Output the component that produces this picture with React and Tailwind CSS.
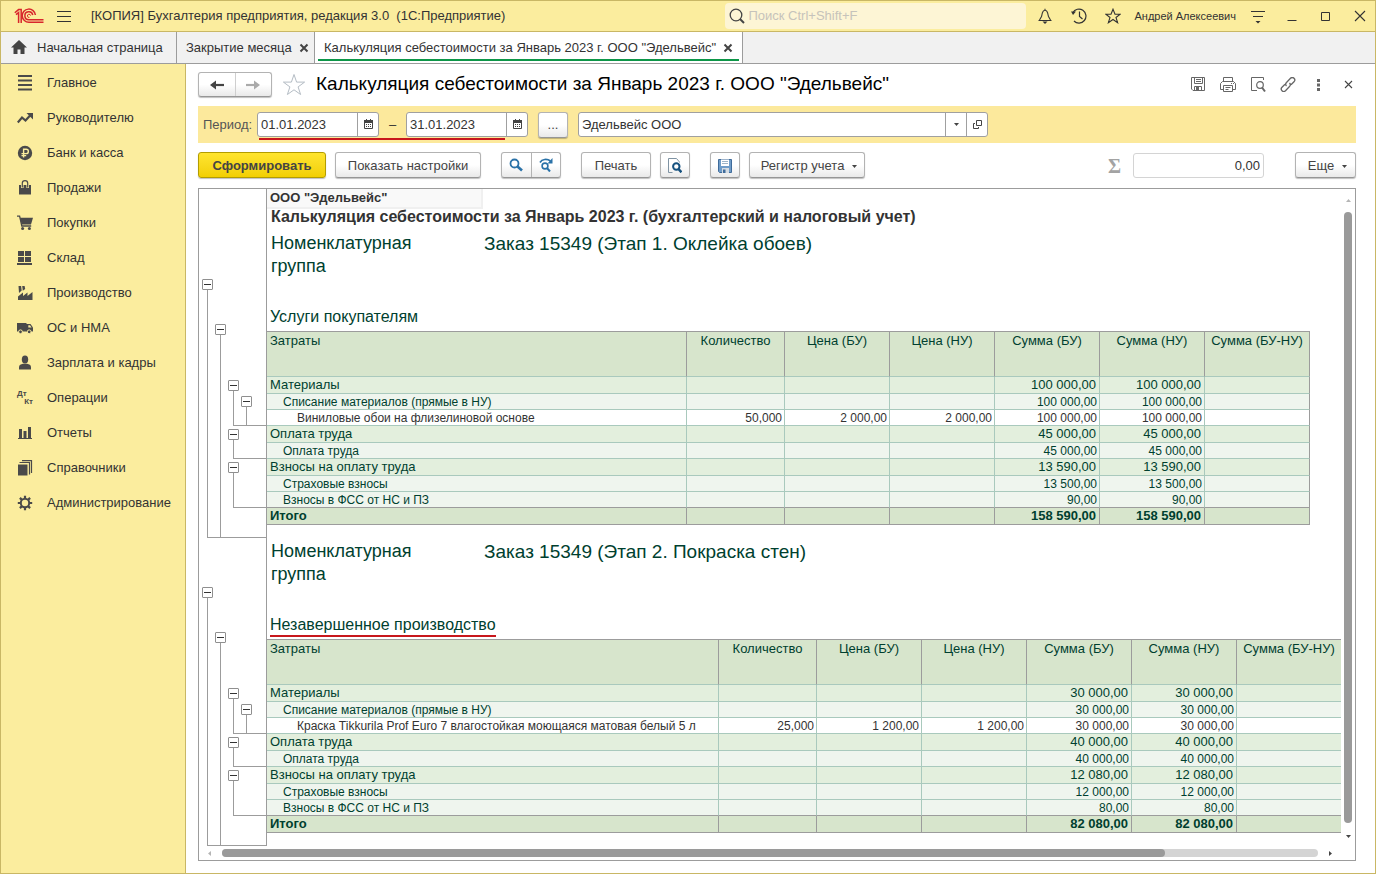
import React, { useState } from "react";
import clsx from "clsx";

const Svg = ({ w = 16, h = 16, className, children }) => (
  <svg
    width={w}
    height={h}
    viewBox={`0 0 ${w} ${h}`}
    fill="none"
    className={clsx("block shrink-0", className)}
    aria-hidden="true"
  >
    {children}
  </svg>
);

const Logo = () => (
  <Svg w={30} h={16}>
    <g stroke="#d8262c" strokeWidth="1.5">
      <path d="M0.8 4.8 L4.6 1.6 H7.2 V15" />
      <path d="M2 6.6 L4.6 4.6 V15" />
      <path d="M21.4 7 A6.6 6.6 0 1 0 15 14.3 H29.5" />
      <path d="M18.8 7 A4 4 0 1 0 15 11.8 H29.5" />
      <path d="M16.6 7.6 A1.6 1.6 0 1 0 15.4 9.4" strokeWidth="1" />
    </g>
  </Svg>
);

const sectionIcons = {
  main: (
    <Svg>
      <path d="M1 1h14M1 5.5h14M1 10h14M1 14.5h14" stroke="#4a4a4a" strokeWidth="2" />
    </Svg>
  ),
  chief: (
    <Svg>
      <path d="M0.8 12.5 L5 7.5 L8.5 10.5 L14 4.5" stroke="#4a4a4a" strokeWidth="2.2" />
      <path d="M9.5 3h6.5v6.5z" fill="#4a4a4a" />
    </Svg>
  ),
  bank: (
    <Svg>
      <circle cx="8" cy="8" r="7.2" fill="#4a4a4a" />
      <path d="M6.6 12.5V4.3h2.6a2.1 2.1 0 0 1 0 4.3H4.5M4.5 10.6h4.7" stroke="#fbed9e" strokeWidth="1.4" />
    </Svg>
  ),
  sales: (
    <Svg>
      <path d="M2 5h12v9.5H2z" fill="#4a4a4a" />
      <path d="M5.3 8V3.5a2.7 2.7 0 0 1 5.4 0V8" stroke="#fbed9e" strokeWidth="2.6" />
      <path d="M5.3 7.5V3.3a2.7 2.7 0 0 1 5.4 0v4.2" stroke="#4a4a4a" strokeWidth="1.2" />
    </Svg>
  ),
  purchases: (
    <Svg>
      <path d="M0 1.2h2.6l2.2 9.8h9.4" stroke="#4a4a4a" strokeWidth="1.3" />
      <path d="M3 2.8h13l-2 6.6H4.6z" fill="#4a4a4a" />
      <circle cx="5.6" cy="13.4" r="1.5" fill="#4a4a4a" />
      <circle cx="12.4" cy="13.4" r="1.5" fill="#4a4a4a" />
    </Svg>
  ),
  stock: (
    <Svg>
      <path d="M1 1h6v5H1zM8 1h6v5H8zM1 7h6v5H1zM8 7h6v5H8zM0 13h15v2H0z" fill="#4a4a4a" />
    </Svg>
  ),
  production: (
    <Svg>
      <path d="M1 15V11.5L6 7.5V11L10.5 7.5V11L15.5 7V15z" fill="#4a4a4a" />
      <path d="M1.5 1h2.6l.6 4.5L2 8zM5.2 1h2.4l.6 3L5.8 5.8z" fill="#4a4a4a" />
    </Svg>
  ),
  assets: (
    <Svg>
      <path d="M0 3h9.5v8.500H0z" fill="#4a4a4a" />
      <path d="M9 4h4.500l2.500 3.500v4H9z" fill="#4a4a4a" />
      <path d="M11.300 5.300h1.700l1.600 2.300h-3.300z" fill="#fbed9e" />
      <circle cx="3.500" cy="11.800" r="1.900" fill="#4a4a4a" stroke="#fbed9e" />
      <circle cx="12.200" cy="11.800" r="1.900" fill="#4a4a4a" stroke="#fbed9e" />
    </Svg>
  ),
  salary: (
    <Svg>
      <ellipse cx="8" cy="4.500" rx="3.200" ry="3.900" fill="#4a4a4a" />
      <path d="M2 14.500v-2.300C2 10 3.800 9.200 6 8.800h4c2.200.4 4 1.200 4 3.400v2.300z" fill="#4a4a4a" />
    </Svg>
  ),
  reports: (
    <Svg>
      <path d="M1 13.500h14" stroke="#4a4a4a" />
      <path d="M2 4h3v9H2zM6.500 6h3v7h-3zM11 2h3v11h-3z" fill="#4a4a4a" />
    </Svg>
  ),
  catalogs: (
    <Svg>
      <path d="M1 4.500h9.500v11H1z" fill="#4a4a4a" />
      <path d="M2.500 2.500h10v12M5 .6h9.500v12.400" stroke="#4a4a4a" strokeWidth="1.200" />
    </Svg>
  ),
  admin: (
    <Svg>
      <circle cx="8" cy="8" r="4.200" stroke="#4a4a4a" strokeWidth="2" />
      <path
        d="M8 .8v3M8 12.200v3M.8 8h3M12.200 8h3M2.900 2.900l2 2M11.100 11.100l2 2M2.900 13.100l2-2M11.100 4.900l2-2"
        stroke="#4a4a4a"
        strokeWidth="2.200"
      />
    </Svg>
  ),
};

const sections = [
  { name: "Главное", icon: "main" },
  { name: "Руководителю", icon: "chief" },
  { name: "Банк и касса", icon: "bank" },
  { name: "Продажи", icon: "sales" },
  { name: "Покупки", icon: "purchases" },
  { name: "Склад", icon: "stock" },
  { name: "Производство", icon: "production" },
  { name: "ОС и НМА", icon: "assets" },
  { name: "Зарплата и кадры", icon: "salary" },
  { name: "Операции", icon: "operations" },
  { name: "Отчеты", icon: "reports" },
  { name: "Справочники", icon: "catalogs" },
  { name: "Администрирование", icon: "admin" },
];

const IconButton = ({ label, className, children }) => (
  <button type="button" aria-label={label} className={clsx("flex items-center justify-center", className)}>
    {children}
  </button>
);

const TitleBar = () => (
  <header className="flex h-[31px] items-center border-b border-[#c9b765] bg-[#fbed9e] pl-[13px] pr-[7px]">
    <Logo />
    <IconButton label="Меню" className="ml-3 h-4 w-4">
      <Svg>
        <path d="M1 3.500h14M1 8.500h14M1 13.500h14" stroke="#333" />
      </Svg>
    </IconButton>
    <span className="ml-[19px] whitespace-pre text-[13px]">[КОПИЯ] Бухгалтерия предприятия, редакция 3.0  (1С:Предприятие)</span>
    <label className="ml-auto flex h-[26px] w-[301px] items-center rounded-sm bg-[#fdf5d5] pl-1">
      <Svg w={16} h={16}>
        <circle cx="7" cy="7" r="5.800" stroke="#444" strokeWidth="1.300" />
        <path d="M11 11l4 4" stroke="#444" strokeWidth="2" />
      </Svg>
      <input
        type="search"
        aria-label="Поиск"
        placeholder="Поиск Ctrl+Shift+F"
        className="ml-[3px] min-w-0 flex-1 bg-transparent text-[13px] outline-none placeholder:text-[#c6c3bb]"
      />
    </label>
    <IconButton label="Уведомления" className="ml-[11px] h-4 w-4">
      <Svg>
        <path d="M1.500 12.500h13M2.500 12l2-3.500C5 7 5 6 5.500 4.500 6 2.800 7 2.300 8 2.300s2 .5 2.500 2.200C11 6 11 7 11.500 8.500l2 3.500M8 .8v1.500" stroke="#333" strokeWidth="1.100" />
        <path d="M5.500 13.500h5L8 16z" fill="#333" />
      </Svg>
    </IconButton>
    <IconButton label="История" className="ml-[18px] h-4 w-4">
      <Svg>
        <path d="M1.800 4.700A7 7 0 1 1 3 13M8.500 3.500v5l3 2.500" stroke="#333" strokeWidth="1.200" />
        <path d="M0 3.500h5L2 7z" fill="#333" />
      </Svg>
    </IconButton>
    <IconButton label="Избранное" className="ml-[18px] h-4 w-4">
      <Svg>
        <path d="M8 1.200l2 5h5.200l-4.200 3.300 1.600 5.200L8 11.500l-4.600 3.200L5 9.500.8 6.200H6z" stroke="#333" strokeWidth="1.100" />
      </Svg>
    </IconButton>
    <span className="ml-[13px] text-[11px]">Андрей Алексеевич</span>
    <IconButton label="Сервис" className="ml-3.5 h-4 w-4">
      <Svg>
        <path d="M1 3.500h14M3 8.500h10" stroke="#333" />
        <path d="M5.500 13h5L8 15.500z" fill="#333" />
      </Svg>
    </IconButton>
    <IconButton label="Свернуть" className="ml-[18px] h-4 w-4">
      <Svg>
        <path d="M3.500 12.500h9" stroke="#333" />
      </Svg>
    </IconButton>
    <IconButton label="Развернуть" className="ml-[18px] h-4 w-4">
      <Svg>
        <path d="M3.500 4.500h8v8h-8z" stroke="#333" />
      </Svg>
    </IconButton>
    <IconButton label="Закрыть" className="ml-[18px] h-4 w-4">
      <Svg>
        <path d="M3 3l10 10M13 3L3 13" stroke="#333" strokeWidth="1.100" />
      </Svg>
    </IconButton>
  </header>
);

const CloseTab = () => (
  <IconButton label="Закрыть вкладку" className="ml-1.5 h-3 w-3">
    <Svg w={12} h={12}>
      <path d="M2.500 2.500l7 7M9.500 2.500l-7 7" stroke="#444" strokeWidth="2" />
    </Svg>
  </IconButton>
);

const Tabs = () => (
  <nav className="flex h-8 border-b border-[#9c9c9c] bg-[#f1f1f1]">
    <a href="#home" className="flex w-[176px] items-center border-r border-[#9c9c9c] pl-2.5">
      <Svg>
        <path d="M8 0L0 7.500h2.500V14h4V9.500h3V14h4V7.500H16z" fill="#444" />
      </Svg>
      <span className="ml-2.5 text-[13px]">Начальная страница</span>
    </a>
    <div className="flex w-[138px] items-center border-r border-[#9c9c9c] pl-[9px]">
      <a href="#closing" className="text-[13px]">Закрытие месяца</a>
      <CloseTab />
    </div>
    <div className="flex w-[428px] flex-col border-r border-[#9c9c9c] bg-white px-[3px] pb-0.5">
      <div className="flex flex-1 items-center border-b-2 border-[#0d9648] pl-1.5 pt-1">
        <a href="#report" className="text-[13px]">Калькуляция себестоимости за Январь 2023 г. ООО "Эдельвейс"</a>
        <CloseTab />
      </div>
    </div>
  </nav>
);

const Sidebar = () => (
  <aside className="w-[185px] shrink-0 border-r border-[#c9b765] bg-[#fbed9e] pt-px">
    {sections.map((item) => (
      <a key={item.name} href="#section" className="flex h-[35px] items-center pl-4">
        {item.icon === "operations" ? (
          <span className="flex w-4 flex-col text-[8px] font-bold leading-[8px] text-[#4a4a4a]">
            <span>Дт</span>
            <span className="self-end">Кт</span>
          </span>
        ) : (
          sectionIcons[item.icon]
        )}
        <span className="ml-3.5 text-[13px]">{item.name}</span>
      </a>
    ))}
  </aside>
);

const buttonLook = "border border-[#b3b3b3] border-b-[#969696] bg-linear-to-b from-white from-50% to-[#e9e9e9] shadow-[0_1px_1px_rgba(0,0,0,0.25)]";

const ToolButton = ({ className, children, ...props }) => (
  <button
    type="button"
    className={clsx("flex h-[26px] items-center justify-center rounded-[3px] pt-px text-[13px] text-[#444]", buttonLook, className)}
    {...props}
  >
    {children}
  </button>
);

const Caret = ({ className }) => (
  <Svg w={5} h={3} className={className}>
    <path d="M0 0h5L2.500 3z" fill="#444" />
  </Svg>
);

const ReportHeader = () => (
  <div className="flex h-[25px] items-center">
    <div className={clsx("flex h-[25px] w-[74px] rounded-[3px]", buttonLook)}>
      <IconButton label="Назад" className="flex-1 border-r border-[#cfcfcf]">
        <Svg>
          <path d="M3 8h12" stroke="#444" strokeWidth="2.200" />
          <path d="M1 8l6-4.500v9z" fill="#444" />
        </Svg>
      </IconButton>
      <IconButton label="Вперед" className="flex-1">
        <Svg>
          <path d="M1 8h12" stroke="#aaa" strokeWidth="2.200" />
          <path d="M15 8L9 3.500v9z" fill="#aaa" />
        </Svg>
      </IconButton>
    </div>
    <IconButton label="В избранное" className="ml-2.5">
      <Svg w={24} h={24}>
        <path d="M12 1.500l2.600 7.600h8l-6.500 4.800 2.500 7.600-6.600-4.700-6.600 4.700 2.500-7.600L1.400 9.100h8z" stroke="#b4bcc4" />
      </Svg>
    </IconButton>
    <h1 className="ml-2.5 text-[19px] text-black">Калькуляция себестоимости за Январь 2023 г. ООО "Эдельвейс"</h1>
    <div className="ml-auto flex gap-3.5 text-[#666]">
      <IconButton label="Сохранить">
        <Svg>
          <path d="M1.500.5h13v13H3L1.500 12zM4.500.5v6h8v-6M6 2.500h5M6 4.500h5M4.500 13.500v-4h7v4" stroke="currentColor" />
          <path d="M6 10h3v3H6z" fill="currentColor" />
        </Svg>
      </IconButton>
      <IconButton label="Печать">
        <Svg>
          <path d="M3.500 4.500v-4h9v4M3.500 12.500h-3v-6l2-2h11l2 2v6h-3M3.500 8.500h9v6h-9zM5.500 10.500h5M5.500 12.500h3" stroke="currentColor" />
          <path d="M11 6h1v1h-1zM13 6h1v1h-1z" fill="currentColor" />
        </Svg>
      </IconButton>
      <IconButton label="Просмотр">
        <Svg>
          <path d="M13.500 3V.5h-12v13H7" stroke="currentColor" />
          <circle cx="10" cy="8" r="3.300" stroke="currentColor" strokeWidth="1.200" />
          <path d="M12 10.500l3 4" stroke="currentColor" strokeWidth="2" />
        </Svg>
      </IconButton>
      <IconButton label="Ссылка">
        <Svg>
          <path d="M6.500 9c-1-1-1-2.500 0-3.500l4-4.200c1-1 2.500-1 3.500 0s1 2.500 0 3.500l-3 3M9.500 6c1 1 1 2.500 0 3.500l-4 4.200c-1 1-2.500 1-3.500 0s-1-2.500 0-3.500l3-3" stroke="currentColor" strokeWidth="1.300" />
        </Svg>
      </IconButton>
      <IconButton label="Еще действия">
        <Svg>
          <path d="M7 2h3v3H7zM7 6.500h3v3H7zM7 11h3v3H7z" fill="currentColor" />
        </Svg>
      </IconButton>
      <IconButton label="Закрыть отчет">
        <Svg>
          <path d="M5 4l7 7M12 4l-7 7" stroke="#444" strokeWidth="1.100" />
        </Svg>
      </IconButton>
    </div>
  </div>
);

const DateField = ({ label, value, onChange }) => (
  <div className="flex h-[25px] w-[122px] rounded-[3px] border border-[#a0a0a0] bg-white">
    <input
      type="text"
      aria-label={label}
      value={value}
      onChange={(e) => onChange(e.target.value)}
      className="w-[99px] pl-[3px] text-[13px] outline-none"
    />
    <IconButton label="Календарь" className="flex-1 border-l border-[#a0a0a0] pb-0.5">
      <Svg w={9} h={10}>
        <path d="M.5 2.500h8v7h-8zM2.500 0v2M6.500 0v2" stroke="#444" />
        <path d="M0 1h9v3H0z" fill="#444" />
        <path d="M2 5.500h5M2 7.500h5" stroke="#444" strokeDasharray="1 1" />
      </Svg>
    </IconButton>
  </div>
);

const PeriodPanel = () => {
  const [from, setFrom] = useState("01.01.2023");
  const [to, setTo] = useState("31.01.2023");
  const [company, setCompany] = useState("Эдельвейс ООО");

  return (
    <div className="relative mt-[9px] flex h-[37px] items-center bg-[#fce99c] pl-[5px]">
      <span className="w-[54px] text-[13px] text-[#555]">Период:</span>
      <DateField label="Начало периода" value={from} onChange={setFrom} />
      <span className="w-[27px] text-center text-[13px]">–</span>
      <DateField label="Конец периода" value={to} onChange={setTo} />
      <ToolButton className="ml-2.5 w-[30px]" aria-label="Выбрать период">...</ToolButton>
      <div className="ml-2.5 flex h-[25px] w-[410px] rounded-[3px] border border-[#a0a0a0] bg-white">
        <input
          type="text"
          aria-label="Организация"
          value={company}
          onChange={(e) => setCompany(e.target.value)}
          className="min-w-0 flex-1 pl-[3px] text-[13px] outline-none"
        />
        <IconButton label="Выбрать" className="w-[21px] border-l border-[#a0a0a0]">
          <Caret />
        </IconButton>
        <IconButton label="Открыть" className="w-[21px] border-l border-[#a0a0a0]">
          <Svg w={9} h={9}>
            <path d="M3.500.5h5v5h-5zM2 3.500H.5v5h5V7" stroke="#444" />
          </Svg>
        </IconButton>
      </div>
      {/* red pencil mark under the period */}
      <div className="absolute bottom-[3px] left-[61px] h-0.5 w-[246px] bg-[#c8171c]" />
    </div>
  );
};

const Toolbar = () => (
  <div className="mt-[9px] flex h-[27px] items-start">
    <button
      type="button"
      className="h-[26px] w-[128px] rounded-[3px] border border-[#b39d00] bg-linear-to-b from-[#ffe52e] to-[#f2cf00] pt-px text-[13px] font-bold text-[#444] shadow-[0_1px_1px_rgba(0,0,0,0.25)]"
    >
      Сформировать
    </button>
    <ToolButton className="ml-[9px] w-[146px]">Показать настройки</ToolButton>
    <div className={clsx("ml-5 flex h-[26px] w-[60px] rounded-[3px]", buttonLook)}>
      <IconButton label="Найти" className="flex-1 border-r border-[#b3b3b3]">
        <Svg w={14} h={14}>
          <circle cx="5.500" cy="5.500" r="4" stroke="#2a72a8" strokeWidth="1.800" />
          <path d="M8.500 8.500l4.500 4" stroke="#2a72a8" strokeWidth="2.600" />
        </Svg>
      </IconButton>
      <IconButton label="Найти далее" className="flex-1">
        <Svg w={14} h={14}>
          <circle cx="6" cy="8" r="2.900" stroke="#2a72a8" strokeWidth="1.600" />
          <path d="M8 10l3 3.500" stroke="#2a72a8" strokeWidth="2" />
          <path d="M1 4.500C3 1 8 .5 11.500 3" stroke="#2a72a8" strokeWidth="1.700" />
          <path d="M13.500 0v5.500H8.500z" fill="#2a72a8" />
        </Svg>
      </IconButton>
    </div>
    <ToolButton className="ml-5 w-[70px]">Печать</ToolButton>
    <ToolButton className="ml-[9px] w-[30px]" aria-label="Предварительный просмотр">
      <Svg w={14} h={15}>
        <path d="M11.500 4.500v-.5l-3-3.500h-8v14h4" stroke="#7f93a3" />
        <circle cx="8.300" cy="8.500" r="3.200" stroke="#14507e" strokeWidth="2" />
        <path d="M10.500 11l3 3.300" stroke="#14507e" strokeWidth="2.600" />
      </Svg>
    </ToolButton>
    <ToolButton className="ml-5 w-[30px]" aria-label="Сохранить отчет">
      <Svg w={14} h={14}>
        <path d="M.5.5h13v13h-12l-1-1z" fill="#6f9cc8" stroke="#3f6b9a" />
        <path d="M3 .5h8V7H3z" fill="#fff" />
        <path d="M4 2.500h6M4 4.500h6" stroke="#9db4c8" />
        <path d="M4 9h7v5H4z" fill="#d4dbe2" />
        <path d="M5 10.500h2.500V14H5z" fill="#3f6b9a" />
      </Svg>
    </ToolButton>
    <ToolButton className="ml-[9px] w-[116px] pl-1">
      Регистр учета
      <Caret className="ml-2 mt-0.5" />
    </ToolButton>
    <label htmlFor="sum" className="ml-auto mt-1 font-['Liberation_Serif',serif] text-[20px] font-bold leading-[20px] text-[#a3a3a3]">
      Σ
    </label>
    <input
      id="sum"
      type="text"
      readOnly
      value="0,00"
      className="ml-3 mt-px h-[25px] w-[131px] rounded-[3px] border border-[#d4d4d4] pr-[3px] text-right text-[13px] outline-none"
    />
    <ToolButton className="ml-[31px] w-[61px] pl-1">
      Еще
      <Caret className="ml-2 mt-0.5" />
    </ToolButton>
  </div>
);

// Collapsible outline on the left of the sheet: a toggle with a bracket below it.
const Bracket = ({ className, children }) => (
  <div className={clsx("flex flex-col", className)}>
    <button
      type="button"
      aria-label="Свернуть группу"
      className="flex h-[11px] w-[11px] shrink-0 items-center justify-center rounded-[1px] border border-[#8f8f8f] bg-white"
    >
      <span className="h-px w-[7px] bg-[#333]" />
    </button>
    <div className="ml-[5px] flex flex-1 flex-col border-b border-l border-[#9c9c9c] pl-[7px]">{children}</div>
  </div>
);

const Outline = () => (
  <div className="flex w-[68px] shrink-0 flex-col border-r border-[#9c9c9c] pl-[3px] pt-[49px]">
    <Bracket className="flex-1">
      <Bracket className="-mb-px mt-[34px] flex-1">
        <Bracket className="mt-[45px] h-[46px]">
          <Bracket className="-mb-px mt-[5px] flex-1" />
        </Bracket>
        <Bracket className="mt-[3px] h-[30px]" />
        <Bracket className="mt-[3px] h-[46px]" />
      </Bracket>
    </Bracket>
  </div>
);

const headers = ["Количество", "Цена (БУ)", "Цена (НУ)", "Сумма (БУ)", "Сумма (НУ)", "Сумма (БУ-НУ)"];

const rowLook = [
  "h-[17px] bg-[#e3efdd] text-[13px] leading-4 text-[#003f2f] border-[#a9c9bd]",
  "h-4 bg-[#eff5ee] text-[12px] leading-[14px] text-[#003f2f] border-[#a9c9bd]",
  "h-4 bg-white text-[12px] leading-[14px] text-[#333] border-[#a9c9bd]",
  "h-[17px] bg-[#d7e5cc] text-[13px] leading-4 font-bold text-[#003f2f] border-[#9c9c9c]",
];
const cellTop = ["", "pt-px", "pt-px", ""];
const indent = ["pl-[3px]", "pl-4", "pl-[30px]", "pl-[3px]"];

const stages = [
  {
    order: "Заказ 15349 (Этап 1. Оклейка обоев)",
    kind: "Услуги покупателям",
    nameWidth: "w-[420px]",
    tableWidth: "w-[1043px]",
    rows: [
      { level: 0, name: "Материалы", sum: "100 000,00" },
      { level: 1, name: "Списание материалов (прямые в НУ)", sum: "100 000,00" },
      { level: 2, name: "Виниловые обои на флизелиновой основе", qty: "50,000", price: "2 000,00", sum: "100 000,00" },
      { level: 0, name: "Оплата труда", sum: "45 000,00" },
      { level: 1, name: "Оплата труда", sum: "45 000,00" },
      { level: 0, name: "Взносы на оплату труда", sum: "13 590,00" },
      { level: 1, name: "Страховые взносы", sum: "13 500,00" },
      { level: 1, name: "Взносы в ФСС от НС и ПЗ", sum: "90,00", last: true },
      { level: 3, name: "Итого", sum: "158 590,00" },
    ],
  },
  {
    order: "Заказ 15349 (Этап 2. Покраска стен)",
    kind: "Незавершенное производство",
    marked: true,
    nameWidth: "w-[452px]",
    tableWidth: "w-[1075px]",
    rows: [
      { level: 0, name: "Материалы", sum: "30 000,00" },
      { level: 1, name: "Списание материалов (прямые в НУ)", sum: "30 000,00" },
      { level: 2, name: "Краска Tikkurila Prof Euro 7 влагостойкая моющаяся матовая белый 5 л", qty: "25,000", price: "1 200,00", sum: "30 000,00" },
      { level: 0, name: "Оплата труда", sum: "40 000,00" },
      { level: 1, name: "Оплата труда", sum: "40 000,00" },
      { level: 0, name: "Взносы на оплату труда", sum: "12 080,00" },
      { level: 1, name: "Страховые взносы", sum: "12 000,00" },
      { level: 1, name: "Взносы в ФСС от НС и ПЗ", sum: "80,00", last: true },
      { level: 3, name: "Итого", sum: "82 080,00" },
    ],
  },
];

const CostTable = ({ stage }) => (
  <table className={clsx("table-fixed border-separate border-spacing-0 border-t border-[#9c9c9c]", stage.tableWidth)}>
    <thead>
      <tr className="h-[45px] bg-[#d7e5cc] text-[13px] leading-[15px] text-[#003f2f]">
        <th className={clsx("border-b border-r border-b-[#a9c9bd] border-r-[#9c9c9c] pl-[3px] pt-px text-left align-top font-normal", stage.nameWidth)}>
          Затраты
        </th>
        {headers.map((title, i) => (
          <th
            key={title}
            className={clsx(
              "border-b border-r border-b-[#a9c9bd] border-r-[#9c9c9c] pt-px text-center align-top font-normal",
              i === 0 ? "w-[98px]" : "w-[105px]"
            )}
          >
            {title}
          </th>
        ))}
      </tr>
    </thead>
    <tbody>
      {stage.rows.map((row, n) => {
        const cells = [row.qty, row.price, row.price, row.sum, row.sum, ""];
        const line = row.last ? "border-b-[#9c9c9c]" : "";
        return (
          <tr key={n} className={rowLook[row.level]}>
            <td className={clsx("whitespace-nowrap border-b border-r border-inherit", cellTop[row.level], indent[row.level], line)}>
              {row.name}
            </td>
            {cells.map((value, i) => (
              <td
                key={i}
                className={clsx(
                  "border-b border-r border-inherit text-right",
                  cellTop[row.level],
                  row.level === 1 || row.level === 2 ? "pr-0.5" : "pr-[3px]",
                  i === 5 && "border-r-[#9c9c9c]",
                  line
                )}
              >
                {value}
              </td>
            ))}
          </tr>
        );
      })}
    </tbody>
  </table>
);

const Stage = ({ stage }) => (
  <section className="flex">
    <Outline />
    <div className="pb-[13px] pt-0.5">
      <div className="flex pl-1 leading-[23px] text-[#003f2f]">
        <h3 className="w-[213px] pr-10 text-[18px]">Номенклатурная группа</h3>
        <span className="whitespace-nowrap text-[19px]">{stage.order}</span>
      </div>
      <h4 className="mt-[29px] flex h-6 pl-[3px] text-[16px] leading-[20px] text-[#003f2f]">
        <span className={clsx("h-[22px]", stage.marked && "border-b-2 border-[#c8171c]")}>{stage.kind}</span>
      </h4>
      <CostTable stage={stage} />
    </div>
  </section>
);

const Report = () => (
  <div className="mb-3 mt-[9px] flex flex-1 flex-col border border-[#9c9c9c] bg-white">
    <div className="flex">
      <div className="min-w-0 flex-1 overflow-hidden">
        <div className="flex">
          <div className="w-[68px] shrink-0 border-r border-[#9c9c9c]" />
          <div className="h-[41px] text-[#333]">
            <div className="h-5 w-[216px] border-b-2 border-r-2 border-[#f0f0f0] bg-[#f9f9f9] pl-[3px] text-[13px] font-bold leading-[18px]">
              ООО "Эдельвейс"
            </div>
            <h2 className="whitespace-nowrap pl-1 text-[16px] font-bold leading-4">
              Калькуляция себестоимости за Январь 2023 г. (бухгалтерский и налоговый учет)
            </h2>
          </div>
        </div>
        {stages.map((stage) => (
          <Stage key={stage.order} stage={stage} />
        ))}
      </div>
      <div className="flex w-3.5 shrink-0 flex-col items-center pb-2 pt-2.5">
        <Svg w={5} h={3}>
          <path d="M0 3h5L2.500 0z" fill="#b5b5b5" />
        </Svg>
        <div className="mb-3 mt-2.5 w-2 flex-1 rounded bg-[#9a9a9a]" />
        <Svg w={5} h={3}>
          <path d="M0 0h5L2.500 3z" fill="#444" />
        </Svg>
      </div>
    </div>
    <div className="flex h-3.5 items-center pl-[9px] pr-[23px]">
      <Svg w={3} h={5}>
        <path d="M3 0v5L0 2.500z" fill="#b5b5b5" />
      </Svg>
      <div className="mx-[11px] h-2 flex-1 rounded bg-[#d4d4d4]">
        <div className="h-2 w-[86%] rounded bg-[#9a9a9a]" />
      </div>
      <Svg w={3} h={5}>
        <path d="M0 0v5l3-2.500z" fill="#444" />
      </Svg>
    </div>
  </div>
);

const App = () => (
  <div className="flex min-h-screen flex-col border border-[#c9b765] bg-white font-['Liberation_Sans',Arial,sans-serif] text-[#333]">
    <TitleBar />
    <Tabs />
    <div className="flex flex-1">
      <Sidebar />
      <main className="flex min-w-0 flex-1 flex-col pl-3 pr-[19px] pt-2">
        <ReportHeader />
        <PeriodPanel />
        <Toolbar />
        <Report />
      </main>
    </div>
  </div>
);

export default App;
